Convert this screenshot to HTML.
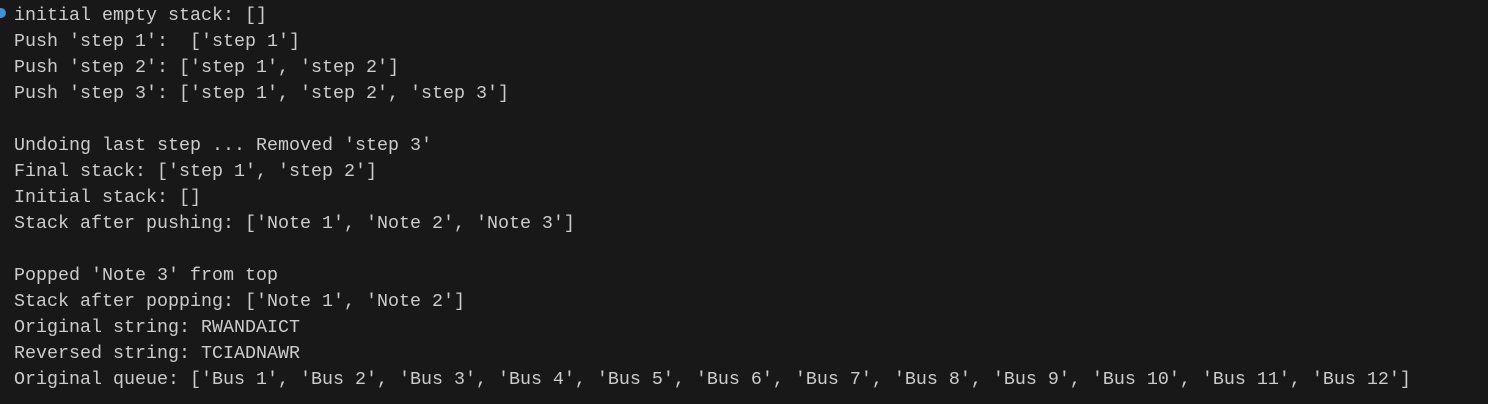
<!DOCTYPE html>
<html><head><meta charset="utf-8"><style>
html,body{margin:0;padding:0;width:1488px;height:404px;background:#181818;overflow:hidden}
pre{margin:0;position:absolute;left:14px;top:3px;font-family:"Liberation Mono",monospace;font-size:18.33px;line-height:26px;color:#cccccc;white-space:pre}
.dot{position:absolute;left:-4px;top:8px;width:10px;height:10px;border-radius:50%;background:#3794d8}
</style></head><body>
<div class="dot"></div>
<pre>initial empty stack: []
Push 'step 1':  ['step 1']
Push 'step 2': ['step 1', 'step 2']
Push 'step 3': ['step 1', 'step 2', 'step 3']

Undoing last step ... Removed 'step 3'
Final stack: ['step 1', 'step 2']
Initial stack: []
Stack after pushing: ['Note 1', 'Note 2', 'Note 3']

Popped 'Note 3' from top
Stack after popping: ['Note 1', 'Note 2']
Original string: RWANDAICT
Reversed string: TCIADNAWR
Original queue: ['Bus 1', 'Bus 2', 'Bus 3', 'Bus 4', 'Bus 5', 'Bus 6', 'Bus 7', 'Bus 8', 'Bus 9', 'Bus 10', 'Bus 11', 'Bus 12']</pre>
</body></html>
